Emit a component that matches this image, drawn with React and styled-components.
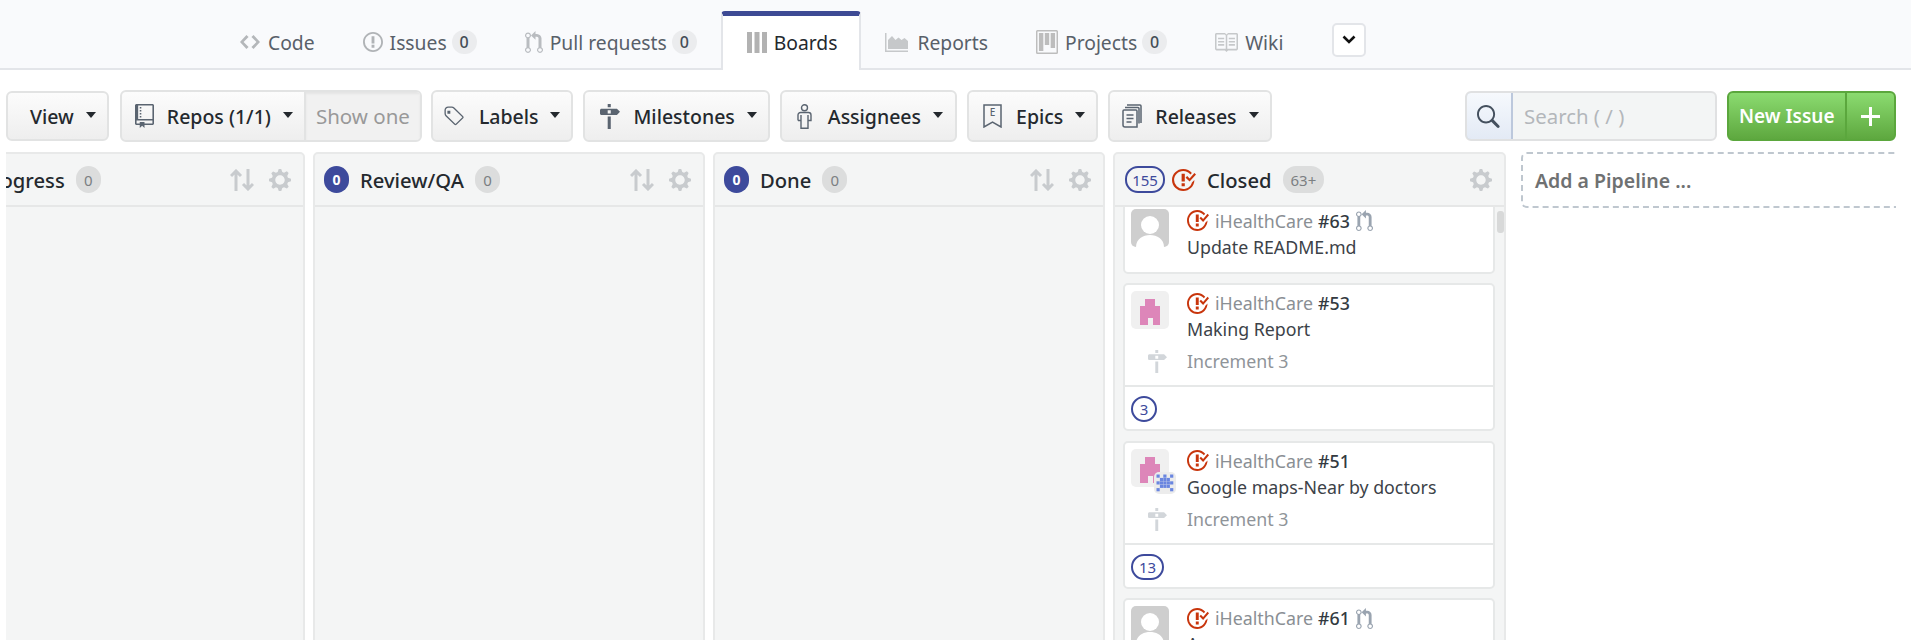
import React from 'react';
import styled, { createGlobalStyle } from 'styled-components';

const GlobalStyle = createGlobalStyle`
    html, body {
        margin: 0;
        padding: 0;
        background: #fff;
        font-family: 'Noto Sans', 'Open Sans', sans-serif;
    }
    * { box-sizing: border-box; }
`;

const Page = styled.div`
    display: flex;
    flex-direction: column;
    width: 1911px;
    height: 640px;
    overflow: hidden;
`;

const TabBar = styled.nav`
    display: flex;
    align-items: stretch;
    height: 70px;
    padding: 11px 0 0 216px;
    background: #f9fafc;
    border-bottom: 2px solid #e3e5e9;
`;

const Tab = styled.div`
    display: flex;
    align-items: center;
    gap: ${props => props.gap || 7}px;
    padding: 5px 24px 0;
    font-size: 19.3px;
    color: #586069;
    ${props => props.active && `
        margin: 0 0 -2px 0;
        padding: 2px 22px 4px 24px;
        color: #24292e;
        background: #fff;
        border: solid #e3e5e9;
        border-width: 0 2px;
        border-top: 5px solid #3d4a94;
        border-radius: 4px 4px 0 0;
    `}
`;

const TabBadge = styled.span`
    display: inline-flex;
    align-items: center;
    justify-content: center;
    width: 25px;
    height: 24px;
    margin-left: -2px;
    border-radius: 12px;
    background: #ebecee;
    color: #444d56;
    font-size: 16px;
    font-weight: 500;
`;

const MoreButton = styled.div`
    display: flex;
    align-items: center;
    justify-content: center;
    align-self: center;
    width: 34px;
    height: 34px;
    margin-left: 25px;
    background: #fff;
    border: 2px solid #e3e5e9;
    border-radius: 5px;
`;

const Toolbar = styled.div`
    display: flex;
    align-items: center;
    gap: 10px;
    height: 82px;
    padding: 18px 15px 8px 6px;
`;

const Button = styled.div`
    display: flex;
    align-items: center;
    height: ${props => props.small ? 50 : 52}px;
    margin-right: ${props => props.small ? 1 : 0}px;
    padding: 0 ${props => props.right || 11}px 0 ${props => props.left || 15}px;
    background: linear-gradient(#fcfcfc, #eeeeee);
    border: 2px solid #e2e3e3;
    border-radius: 6px;
    color: #24292e;
    font-size: 19.5px;
    font-weight: 500;
    white-space: nowrap;
`;

const ButtonIcon = styled.span`
    display: flex;
    margin-right: ${props => props.gap || 14}px;
    color: #5a6470;
`;

const Caret = styled.span`
    width: 0;
    height: 0;
    margin: -3px 0 0 12px;
    border-style: solid;
    border-width: 6px 5.5px 0;
    border-color: #24292e transparent transparent;
`;

const RepoGroup = styled.div`
    display: flex;
    height: 52px;
    margin-right: -1px;
    border: 2px solid #e2e3e3;
    border-radius: 6px;
    overflow: hidden;
    background: linear-gradient(#fcfcfc, #eeeeee);
`;

const RepoPart = styled(Button)`
    height: 48px;
    margin-right: 0;
    border: 0;
    border-radius: 0;
    background: none;
    padding-left: 13px;
`;

const ShowOne = styled.div`
    display: flex;
    align-items: center;
    padding: 0 10px;
    background: #f1f1f1;
    border-left: 2px solid #e2e3e3;
    box-shadow: inset 0 2px 2px #e4e4e4;
    color: #999;
    font-size: 20.5px;
    white-space: nowrap;
`;

const Search = styled.div`
    display: flex;
    width: 252px;
    height: 50px;
    margin-left: auto;
    border: 2px solid #e0e1e2;
    border-radius: 6px;
    overflow: hidden;
    background: #f3f5f5;
`;

const SearchIcon = styled.div`
    display: flex;
    align-items: center;
    justify-content: center;
    width: 48px;
    margin: -2px 0 -2px -2px;
    background: linear-gradient(#f6f9fd, #e3eaf5);
    border: 2px solid #bcc8dc;
    border-radius: 6px 0 0 6px;
    color: #44505e;
`;

const SearchInput = styled.input`
    flex: 1;
    min-width: 0;
    padding: 0 11px;
    border: 0;
    outline: 0;
    background: none;
    font-family: inherit;
    font-size: 20.4px;
    &::placeholder { color: #b3b7bb; opacity: 1; }
`;

const NewIssue = styled.div`
    display: flex;
    height: 50px;
    background: linear-gradient(#8bdb70, #5ea83f);
    border: 2px solid #5ba73d;
    border-radius: 6px;
    color: #fff;
    font-size: 19px;
    font-weight: 600;
`;

const NewIssueLabel = styled.div`
    display: flex;
    align-items: center;
    width: 118px;
    padding-left: 10px;
    border-right: 2px solid #5ba73d;
    white-space: nowrap;
`;

const NewIssuePlus = styled.div`
    display: flex;
    align-items: center;
    justify-content: center;
    width: 47px;
`;

const BoardWindow = styled.div`
    flex: 1;
    min-height: 0;
    margin: 0 15px 0 6px;
    overflow: hidden;
`;

const BoardTrack = styled.div`
    display: flex;
    align-items: flex-start;
    gap: 8px;
    margin-left: -93px;
`;

const Column = styled.section`
    display: flex;
    flex: none;
    flex-direction: column;
    width: ${props => props.wide ? 393 : 392}px;
    height: 560px;
    background: #f4f5f5;
    border: 2px solid #e8e9e9;
    border-radius: 5px;
`;

const ColumnHead = styled.header`
    display: flex;
    flex: none;
    align-items: center;
    height: 53px;
    padding: 0 12px 0 ${props => props.pad || 9}px;
    border-bottom: 2px solid #e6e7e7;
    font-size: 20.2px;
    font-weight: 500;
    color: #24292e;
`;

const CountDot = styled.span`
    display: inline-flex;
    align-items: center;
    justify-content: center;
    width: 25px;
    height: 27px;
    margin-right: ${props => props.gap || 11}px;
    border-radius: 13px;
    background: #3d4a9c;
    color: #fff;
    font-size: 14px;
    font-weight: 700;
`;

const CountPill = styled.span`
    display: inline-flex;
    align-items: center;
    justify-content: center;
    flex: none;
    min-width: ${props => props.small ? 26 : 40}px;
    height: ${props => props.small ? 26 : 27}px;
    padding: 0 ${props => props.wide ? 6 : 0}px;
    border: 2px solid #3d4a9c;
    border-radius: 13px;
    color: #3d4a9c;
    font-size: 15px;
    font-weight: 400;
`;

const ClosedMark = styled.span`
    display: flex;
    margin: 0 11px 0 7px;
`;

const MutedBadge = styled.span`
    display: inline-flex;
    align-items: center;
    justify-content: center;
    min-width: 25px;
    height: 27px;
    margin-left: 11px;
    padding: 0 ${props => props.wide ? 8 : 0}px;
    border-radius: 13px;
    background: #dcdddd;
    color: #7b7f82;
    font-size: 15px;
    font-weight: 400;
`;

const HeadTools = styled.div`
    display: flex;
    align-items: center;
    gap: 15px;
    margin-left: auto;
    color: #c8cbce;
`;

const CardList = styled.div`
    position: relative;
    flex: 1;
    min-height: 0;
    overflow: hidden;
`;

const ScrollThumb = styled.div`
    position: absolute;
    top: 4px;
    right: 0;
    width: 7px;
    height: 22px;
    border-radius: 3px;
    background: #d8d9d9;
`;

const CardStack = styled.div`
    display: flex;
    flex-direction: column;
    gap: 9.5px;
    margin: -6.5px 9px 0 8px;
`;

const Card = styled.article`
    flex: none;
    background: #fff;
    border: 2px solid #e6e8e8;
    border-radius: 5px;
`;

const CardBody = styled.div`
    display: grid;
    grid-template-columns: 38px 1fr;
    column-gap: 18px;
    padding: 6px 8px 9px 6px;
`;

const AvatarBox = styled.div`
    position: relative;
    width: 38px;
    height: 38px;
`;

const Avatar = styled.svg`
    display: block;
    border-radius: 5px;
`;

const AvatarBadge = styled.svg`
    position: absolute;
    right: -7px;
    bottom: -7px;
    border-radius: 5px;
`;

const IssueRow = styled.div`
    display: flex;
    align-items: center;
    gap: 6px;
    height: 24px;
    font-size: 17.8px;
    color: #8a8f94;
`;

const IssueNumber = styled.span`
    margin-left: -1px;
    color: #333a41;
    font-weight: 500;
`;

const CardTitle = styled.div`
    height: 30px;
    line-height: 29px;
    font-size: 17.8px;
    color: #3c4248;
`;

const MilestoneMark = styled.div`
    display: flex;
    align-items: center;
    justify-content: flex-end;
    height: 29px;
    margin-top: 2px;
    padding-right: 2px;
    color: #d2d6da;
`;

const MilestoneName = styled.div`
    height: 29px;
    margin-top: 2px;
    line-height: 28px;
    font-size: 17.8px;
    color: #8f9499;
`;

const CardFooter = styled.footer`
    display: flex;
    padding: 9px 6px 7px;
    border-top: 2px solid #e6e8e8;
`;

const AddPipeline = styled.div`
    display: flex;
    flex: none;
    align-items: center;
    width: 500px;
    height: 56px;
    margin-left: 7px;
    padding-left: 12px;
    border: 2px dashed #bfc7cf;
    border-radius: 6px;
    color: #6f7172;
    font-size: 19.5px;
    font-weight: 600;
`;

// octicon style paths, all filled with currentColor
const paths = {
    code: 'M9.5 3L8 4.5 11.5 8 8 11.5 9.5 13 14 8 9.5 3zm-5 0L0 8l4.5 5L6 11.5 2.5 8 6 4.5 4.5 3z',
    issue: 'M7 2.3c3.14 0 5.7 2.56 5.7 5.7s-2.56 5.7-5.7 5.7A5.71 5.71 0 0 1 1.3 8c0-3.14 2.56-5.7 5.7-5.7zM7 1C3.14 1 0 4.14 0 8s3.14 7 7 7 7-3.14 7-7-3.14-7-7-7zm1 3H6v5h2V4zm0 6H6v2h2v-2z',
    pull: 'M11 11.28V5c-.03-.78-.34-1.47-.94-2.06C9.46 2.35 8.78 2.03 8 2H7V0L4 3l3 3V4h1c.27.02.48.11.69.31.21.2.3.42.31.69v6.28A1.993 1.993 0 0 0 10 15a1.993 1.993 0 0 0 1-3.72zm-1 2.92c-.66 0-1.2-.55-1.2-1.2 0-.65.55-1.2 1.2-1.2.65 0 1.2.55 1.2 1.2 0 .65-.55 1.2-1.2 1.2zM4 3c0-1.11-.89-2-2-2a1.993 1.993 0 0 0-1 3.72v6.56A1.993 1.993 0 0 0 2 15a1.993 1.993 0 0 0 1-3.72V4.72c.59-.34 1-.98 1-1.72zm-.8 10c0 .66-.55 1.2-1.2 1.2-.65 0-1.2-.55-1.2-1.2 0-.65.55-1.2 1.2-1.2.65 0 1.2.55 1.2 1.2zM2 4.2C1.34 4.2.8 3.65.8 3c0-.65.55-1.2 1.2-1.2.65 0 1.2.55 1.2 1.2 0 .65-.55 1.2-1.2 1.2z',
    project: 'M10 12h3V2h-3v10zm-4-2h3V2H6v8zm-4 4h3V2H2v12zm-1 1h13V1H1v14zM14 0H1a1 1 0 0 0-1 1v14a1 1 0 0 0 1 1h13a1 1 0 0 0 1-1V1a1 1 0 0 0-1-1z',
    book: 'M3 5h4v1H3V5zm0 3h4V7H3v1zm0 2h4V9H3v1zm11-5h-4v1h4V5zm0 2h-4v1h4V7zm0 2h-4v1h4V9zm2-6v9c0 .55-.45 1-1 1H9.5l-1 1-1-1H2c-.55 0-1-.45-1-1V3c0-.55.45-1 1-1h5.5l1 1 1-1H15c.55 0 1 .45 1 1zm-8 .5L7.5 3H2v9h6V3.5zm7-.5H9.5l-.5.5V12h6V3z',
    repo: 'M4 9H3V8h1v1zm0-3H3v1h1V6zm0-2H3v1h1V4zm0-2H3v1h1V2zm8-1v12c0 .55-.45 1-1 1H6v2l-1.5-1.5L3 16v-2H1c-.55 0-1-.45-1-1V1c0-.55.45-1 1-1h10c.55 0 1 .45 1 1zm-1 10H1v2h2v-1h3v1h5v-2zm0-10H2v9h9V1z',
    tag: 'M7.73 1.73C7.26 1.26 6.62 1 5.96 1H3.5C2.13 1 1 2.13 1 3.5v2.47c0 .66.27 1.3.73 1.77l6.06 6.06c.39.39 1.02.39 1.41 0l4.59-4.59a.996.996 0 0 0 0-1.41L7.73 1.73zM2.38 7.09c-.31-.3-.47-.7-.47-1.13V3.5c0-.88.72-1.59 1.59-1.59h2.47c.42 0 .83.16 1.13.47l6.14 6.13-4.73 4.73-6.13-6.15zM3 4h2v2H3V4z',
    milestone: 'M8 2H6V0h2v2zm4 5H2c-.55 0-1-.45-1-1V4c0-.55.45-1 1-1h10l2 2-2 2zM8 4H6v2h2V4zM6 16h2V8H6v8z',
    gear: 'M14 8.77v-1.6l-1.94-.64-.45-1.09.88-1.84-1.13-1.13-1.81.91-1.09-.45-.69-1.92h-1.6l-.63 1.94-1.11.45-1.84-.88-1.13 1.13.91 1.81-.45 1.09L0 7.23v1.59l1.94.64.45 1.09-.88 1.84 1.13 1.13 1.81-.91 1.09.45.69 1.92h1.59l.63-1.94 1.11-.45 1.84.88 1.13-1.13-.92-1.81.47-1.09L14 8.75v.02zM7 11c-1.66 0-3-1.34-3-3s1.34-3 3-3 3 1.34 3 3-1.34 3-3 3z',
    search: 'M15.7 13.3l-3.81-3.83A5.93 5.93 0 0 0 13 6c0-3.31-2.69-6-6-6S1 2.69 1 6s2.69 6 6 6c1.3 0 2.48-.41 3.47-1.11l3.83 3.81c.19.2.45.3.7.3.25 0 .52-.09.7-.3a.996.996 0 0 0 0-1.41v.01zM7 10.7c-2.59 0-4.7-2.11-4.7-4.7 0-2.59 2.11-4.7 4.7-4.7 2.59 0 4.7 2.11 4.7 4.7 0 2.59-2.11 4.7-4.7 4.7z',
    closed: 'M7 10h2v2H7v-2zm2-6H7v5h2V4zm1.5 1.5l-1 1L12 9l4-4.5-1-1L12 7l-1.5-1.5zM8 13.7A5.71 5.71 0 0 1 2.3 8c0-3.14 2.56-5.7 5.7-5.7 1.83 0 3.45.88 4.5 2.2l.92-.92A6.947 6.947 0 0 0 8 1C4.14 1 1 4.14 1 8s3.14 7 7 7 7-3.14 7-7l-1.52 1.52c-.66 2.41-2.86 4.19-5.48 4.19v-.01z',
};

const Octicon = ({ name, box, w, h, color }) => (
    <svg width={w} height={h} viewBox={box} fill={color || 'currentColor'} preserveAspectRatio="none">
        <path fillRule="evenodd" d={paths[name]} />
    </svg>
);

const BoardsIcon = () => (
    <svg width="20" height="21" viewBox="0 0 20 21" fill="#b2b2b2">
        <rect x="0" width="5" height="21" />
        <rect x="7.5" width="5" height="21" />
        <rect x="15" width="5" height="21" />
    </svg>
);

const ReportsIcon = () => (
    <svg width="23" height="19" viewBox="0 0 23 19" fill="#c6c8ca">
        <path d="M0 0h1.5v17.5H23V19H0z" />
        <path d="M3 16V7l4-4 3.5 4 3-2.5 3 2.5 3-2 3.5 3v8z" />
    </svg>
);

const SortIcon = () => (
    <svg width="24" height="22" viewBox="0 0 24 22" fill="none" stroke="currentColor" strokeWidth="3">
        <path d="M6 22V2M1 7l5-5 5 5" />
        <path d="M18 0v20M13 15l5 5 5-5" />
    </svg>
);

const PersonIcon = () => (
    <svg width="15" height="25" viewBox="0 0 15 25" fill="none" stroke="currentColor" strokeWidth="1.4">
        <circle cx="7.5" cy="3.8" r="3" />
        <path d="M1 16.5V11a2.5 2.5 0 0 1 2.5-2.5h8A2.5 2.5 0 0 1 14 11v5.5h-3M4 11v13.3h7V11M1 16.5h3" />
    </svg>
);

const EpicIcon = () => (
    <svg width="19" height="24" viewBox="0 0 19 24" fill="none" stroke="currentColor" strokeWidth="1.5">
        <path d="M1 1h17v22l-8.5-5L1 23z" />
        <text x="9.5" y="12" textAnchor="middle" fontSize="10" fill="currentColor" stroke="none">E</text>
    </svg>
);

const ReleasesIcon = () => (
    <svg width="20" height="24" viewBox="0 0 20 24" fill="none" stroke="currentColor" strokeWidth="1.5">
        <path d="M5 1h13a1 1 0 0 1 1 1v17" />
        <path d="M3 3.500h13a1 1 0 0 1 1 1v15" />
        <path d="M1 7a1 1 0 0 1 1-1h12a1 1 0 0 1 1 1v16H3a2 2 0 0 1-2-2z" />
        <path d="M4.500 11h7M4.500 14.500h7M4.500 18h5" />
    </svg>
);

const DefaultAvatar = () => (
    <Avatar width="38" height="38" viewBox="0 0 38 38">
        <rect width="38" height="38" fill="#cecece" />
        <circle cx="19" cy="16" r="9" fill="#fff" />
        <path d="M5 38c0-8 7-12 14-12s14 4 14 12z" fill="#fff" />
    </Avatar>
);

const PinkAvatar = () => (
    <Avatar width="38" height="38" viewBox="0 0 38 38">
        <rect width="38" height="38" fill="#f0f0f0" />
        <path d="M14 8h10v7h5v19h-7v-7h-5v7H9V15h5z" fill="#dd86b9" />
    </Avatar>
);

const invader = ['10101', '01110', '11111', '01110', '10001'];

const BlueBadge = () => (
    <AvatarBadge width="22" height="22" viewBox="0 0 22 22">
        <rect width="22" height="22" fill="#ececec" />
        {invader.map((row, y) => row.split('').map((cell, x) => (
            cell === '1' && <rect key={`${x}-${y}`} x={2.5 + x * 3.4} y={2.5 + y * 3.4} width="3.2" height="3.2" fill="#6a86e0" />
        )))}
    </AvatarBadge>
);

const ClosedIcon = ({ w, h }) => <Octicon name="closed" box="1 1 15 14" w={w} h={h} color="#c8350c" />;

const IssueCard = ({ avatar, number, pull, title, milestone, points, children }) => (
    <Card>
        <CardBody>
            <AvatarBox>
                {avatar}
                {children}
            </AvatarBox>
            <div>
                <IssueRow>
                    <ClosedIcon w={22} h={21} />
                    <span>iHealthCare</span>
                    <IssueNumber>#{number}</IssueNumber>
                    {pull && <Octicon name="pull" box="0 0 12 15" w={17} h={21} color="#9aa4b0" />}
                </IssueRow>
                <CardTitle>{title}</CardTitle>
            </div>
            {milestone && (
                <>
                    <MilestoneMark>
                        <Octicon name="milestone" box="1 0 13 16" w={19} h={23} />
                    </MilestoneMark>
                    <MilestoneName>{milestone}</MilestoneName>
                </>
            )}
        </CardBody>
        {points && (
            <CardFooter>
                <CountPill small wide={points > 9}>{points}</CountPill>
            </CardFooter>
        )}
    </Card>
);

const PipelineColumn = ({ name, count, dotGap }) => (
    <Column>
        <ColumnHead>
            <CountDot gap={dotGap}>0</CountDot>
            {name}
            <MutedBadge>{count}</MutedBadge>
            <HeadTools>
                <SortIcon />
                <Octicon name="gear" box="0 1 14 14" w={22} h={22} />
            </HeadTools>
        </ColumnHead>
    </Column>
);

const App = () => (
    <Page>
        <GlobalStyle />
        <TabBar>
            <Tab gap={8}>
                <Octicon name="code" box="0 3 14 10" w={20} h={14} color="#b4b7ba" />
                Code
            </Tab>
            <Tab>
                <Octicon name="issue" box="0 1 14 14" w={20} h={20} color="#b0b3b6" />
                Issues
                <TabBadge>0</TabBadge>
            </Tab>
            <Tab>
                <Octicon name="pull" box="0 0 12 15" w={18} h={22} color="#b9bcc0" />
                Pull requests
                <TabBadge>0</TabBadge>
            </Tab>
            <Tab active>
                <BoardsIcon />
                Boards
            </Tab>
            <Tab gap={9}>
                <ReportsIcon />
                Reports
            </Tab>
            <Tab>
                <Octicon name="project" box="0 0 15 16" w={22} h={24} color="#bdbdbd" />
                Projects
                <TabBadge>0</TabBadge>
            </Tab>
            <Tab>
                <Octicon name="book" box="1 2 15 12" w={23} h={19} color="#c6c8ca" />
                Wiki
            </Tab>
            <MoreButton>
                <svg width="14" height="9" viewBox="0 0 14 9" fill="none" stroke="#111" strokeWidth="2.600">
                    <path d="M1.500 1.500L7 7l5.500-5.500" />
                </svg>
            </MoreButton>
        </TabBar>
        <Toolbar>
            <Button small left={22}>
                View
                <Caret />
            </Button>
            <RepoGroup>
                <RepoPart>
                    <ButtonIcon gap={13}><Octicon name="repo" box="0 0 12 16" w={19} h={24} /></ButtonIcon>
                    Repos (1/1)
                    <Caret />
                </RepoPart>
                <ShowOne>Show one</ShowOne>
            </RepoGroup>
            <Button left={10}>
                <ButtonIcon><Octicon name="tag" box="0 0 15 16" w={22} h={23} /></ButtonIcon>
                Labels
                <Caret />
            </Button>
            <Button>
                <ButtonIcon gap={13}><Octicon name="milestone" box="1 0 13 16" w={20} h={25} /></ButtonIcon>
                Milestones
                <Caret />
            </Button>
            <Button right={12}>
                <ButtonIcon gap={16}><PersonIcon /></ButtonIcon>
                Assignees
                <Caret />
            </Button>
            <Button left={14}>
                <ButtonIcon><EpicIcon /></ButtonIcon>
                Epics
                <Caret />
            </Button>
            <Button left={12}>
                <ButtonIcon gap={13}><ReleasesIcon /></ButtonIcon>
                Releases
                <Caret />
            </Button>
            <Search>
                <SearchIcon><Octicon name="search" box="1 0 15.9 15" w={24} h={23} /></SearchIcon>
                <SearchInput placeholder="Search ( / )" />
            </Search>
            <NewIssue>
                <NewIssueLabel>New Issue</NewIssueLabel>
                <NewIssuePlus>
                    <svg width="19" height="19" viewBox="0 0 19 19" stroke="#fff" strokeWidth="3">
                        <path d="M9.500 0v19M0 9.500h19" />
                    </svg>
                </NewIssuePlus>
            </NewIssue>
        </Toolbar>
        <BoardWindow>
            <BoardTrack>
                <PipelineColumn name="In Progress" count={0} dotGap={6} />
                <PipelineColumn name="Review/QA" count={0} />
                <PipelineColumn name="Done" count={0} />
                <Column wide>
                    <ColumnHead pad={10}>
                        <CountPill>155</CountPill>
                        <ClosedMark><ClosedIcon w={24} h={22} /></ClosedMark>
                        Closed
                        <MutedBadge wide>63+</MutedBadge>
                        <HeadTools>
                            <Octicon name="gear" box="0 1 14 14" w={22} h={22} />
                        </HeadTools>
                    </ColumnHead>
                    <CardList>
                        <CardStack>
                            <IssueCard avatar={<DefaultAvatar />} number={63} pull title="Update README.md" />
                            <IssueCard avatar={<PinkAvatar />} number={53} title="Making Report" milestone="Increment 3" points={3} />
                            <IssueCard avatar={<PinkAvatar />} number={51} title="Google maps-Near by doctors" milestone="Increment 3" points={13}>
                                <BlueBadge />
                            </IssueCard>
                            <IssueCard avatar={<DefaultAvatar />} number={61} pull title="A" />
                        </CardStack>
                        <ScrollThumb />
                    </CardList>
                </Column>
                <AddPipeline>Add a Pipeline ...</AddPipeline>
            </BoardTrack>
        </BoardWindow>
    </Page>
);

export default App;
